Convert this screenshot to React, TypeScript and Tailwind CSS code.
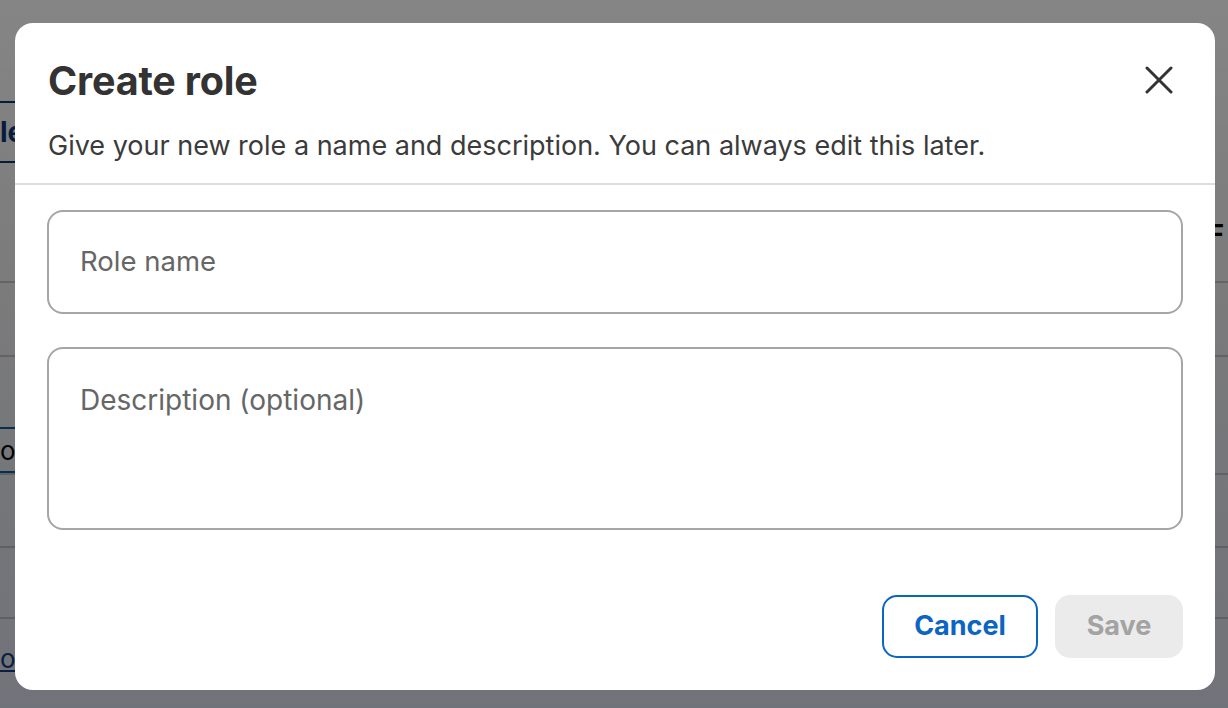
import React from "react";

function CloseIcon() {
  return (
    <svg width="28" height="28" viewBox="0 0 28 28" fill="none">
      <path d="M2 2 L26 26 M26 2 L2 26" stroke="#333333" strokeWidth="3" strokeLinecap="round" />
    </svg>
  );
}

export default function App() {
  const font = { fontFamily: "Inter, 'Noto Sans', sans-serif" };
  return (
    <div className="relative h-[708px] w-full overflow-hidden bg-white" style={font}>
      {/* background page */}
      <div className="flex h-full w-full flex-col">
        <div className="h-[101px]" />
        <div className="flex h-[62px] items-center border-y-2 border-[#0a3a7a] w-[60px] text-[28px] font-bold text-[#0a3a7a]">le</div>
        <div className="flex h-[118px] items-end justify-end pr-[4px] pb-[28px] text-[26px] font-bold text-black">F</div>
        <div className="h-[74px] border-t-2 border-[#d0d0d0]" />
        <div className="h-[72px] border-t-2 border-[#d0d0d0]" />
        <div className="flex h-[46px] w-[60px] items-center border-y-2 border-[#1060b0] text-[26px] text-black">or</div>
        <div className="h-[73px] border-t-2 border-[#d0d0d0]" />
        <div className="h-[71px] border-t-2 border-[#d0d0d0]" />
        <div className="flex h-[65px] items-end pb-[4px] border-t-2 border-[#d0d0d0] text-[26px] text-[#0a3a7a] underline">or(_____).</div>
      </div>
      {/* overlay */}
      <div className="absolute inset-0 bg-gradient-to-b from-[rgba(0,0,0,0.48)] to-[rgba(10,14,25,0.58)]" />
      {/* modal */}
      <div className="absolute inset-0 flex justify-start pl-[15px] pt-[23px]">
        <div className="flex h-[667px] w-[1200px] flex-col rounded-[18px] bg-white">
          <div className="flex flex-col px-[33px] pt-[34px] pb-[20px] border-b-2 border-[#dedede]">
            <div className="flex items-start justify-between">
              <h1 className="text-[39.5px] font-bold leading-[48px] text-[#333333] tracking-[-0.2px]">Create role</h1>
              <button className="mr-[9px] mt-[9px] flex h-[28px] w-[28px] items-center justify-center">
                <CloseIcon />
              </button>
            </div>
            <p className="mt-[24px] text-[27px] leading-[34px] text-[#3b3b3b]">
              Give your new role a name and description. You can always edit this later.
            </p>
          </div>
          <div className="flex flex-col gap-[33px] px-[32px] pt-[25px]">
            <div className="flex h-[104px] items-center rounded-[16px] border-2 border-[#a6a6a6] px-[31px] text-[27.5px] text-[#666666]">
              Role name
            </div>
            <div className="h-[183px] rounded-[16px] border-2 border-[#a6a6a6] px-[31px] pt-[33px] text-[28px] leading-[36px] text-[#666666]">
              Description (optional)
            </div>
          </div>
          <div className="mt-auto flex justify-end gap-[17px] px-[32px] pb-[32px]">
            <button className="flex h-[63px] w-[156px] items-center justify-center rounded-[15px] border-2 border-[#0a66c2] text-[27px] font-bold text-[#0a66c2]">
              Cancel
            </button>
            <button className="flex h-[63px] w-[128px] items-center justify-center rounded-[15px] bg-[#ebebeb] text-[27px] font-bold text-[#a3a3a3]">
              Save
            </button>
          </div>
        </div>
      </div>
    </div>
  );
}
